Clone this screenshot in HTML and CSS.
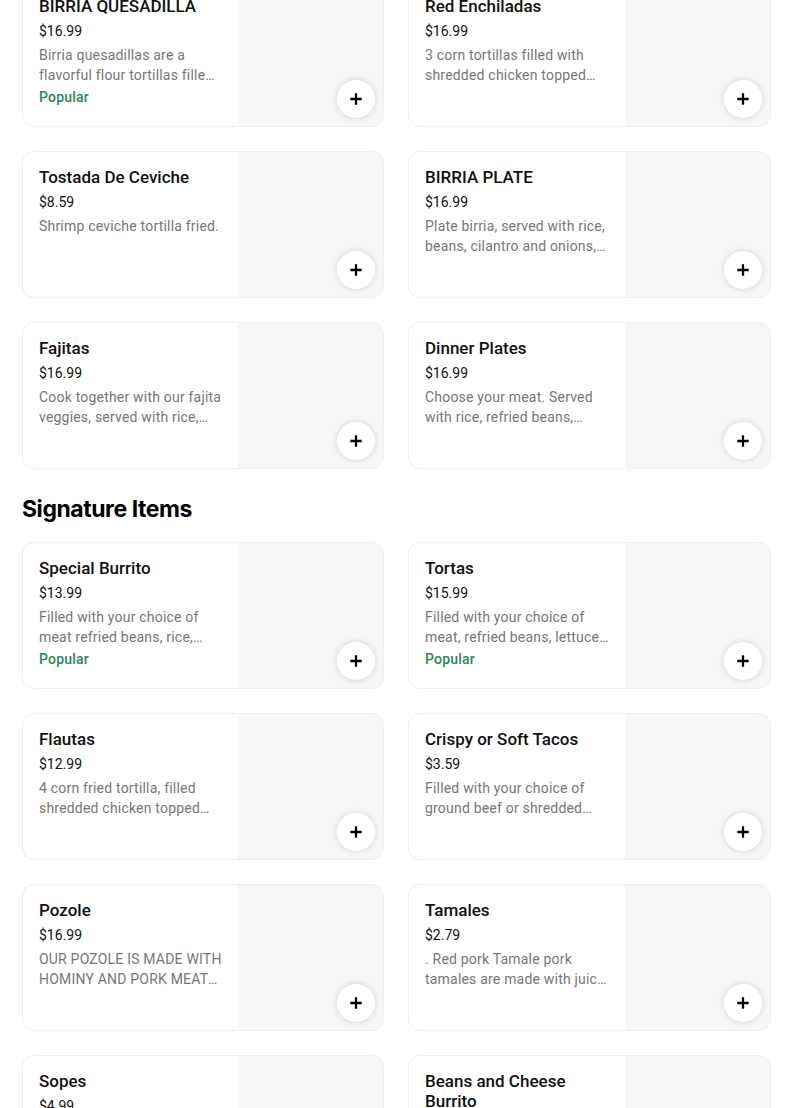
FILE: index.html
```html
<!DOCTYPE html>
<html lang="en">
<head>
<meta charset="utf-8">
<title>Menu</title>
<link rel="stylesheet" href="styles.css">
</head>
<body>
<main class="menu">
  <section class="section">
    <div class="grid">
      <article class="card">
        <div class="info">
          <h3 class="title">BIRRIA QUESADILLA</h3>
          <div class="price">$16.99</div>
          <p class="desc">Birria quesadillas are a flavorful flour tortillas filled with cheese and birria meat.</p>
          <div class="tag">Popular</div>
        </div>
        <div class="thumb"><button class="add" aria-label="Add"><svg viewBox="0 0 16 16" width="14" height="14"><path d="M8 1.5v13M1.5 8h13" stroke="#000" stroke-width="2.6" fill="none"/></svg></button></div>
      </article>
      <article class="card">
        <div class="info">
          <h3 class="title">Red Enchiladas</h3>
          <div class="price">$16.99</div>
          <p class="desc">3 corn tortillas filled with shredded chicken topped with red sauce and cheese.</p>
        </div>
        <div class="thumb"><button class="add" aria-label="Add"><svg viewBox="0 0 16 16" width="14" height="14"><path d="M8 1.5v13M1.5 8h13" stroke="#000" stroke-width="2.6" fill="none"/></svg></button></div>
      </article>
      <article class="card">
        <div class="info">
          <h3 class="title">Tostada De Ceviche</h3>
          <div class="price">$8.59</div>
          <p class="desc">Shrimp ceviche tortilla fried.</p>
        </div>
        <div class="thumb"><button class="add" aria-label="Add"><svg viewBox="0 0 16 16" width="14" height="14"><path d="M8 1.5v13M1.5 8h13" stroke="#000" stroke-width="2.6" fill="none"/></svg></button></div>
      </article>
      <article class="card">
        <div class="info">
          <h3 class="title">BIRRIA PLATE</h3>
          <div class="price">$16.99</div>
          <p class="desc">Plate birria, served with rice, beans, cilantro and onions, and tortillas.</p>
        </div>
        <div class="thumb"><button class="add" aria-label="Add"><svg viewBox="0 0 16 16" width="14" height="14"><path d="M8 1.5v13M1.5 8h13" stroke="#000" stroke-width="2.6" fill="none"/></svg></button></div>
      </article>
      <article class="card">
        <div class="info">
          <h3 class="title">Fajitas</h3>
          <div class="price">$16.99</div>
          <p class="desc">Cook together with our fajita veggies, served with rice, beans and tortillas.</p>
        </div>
        <div class="thumb"><button class="add" aria-label="Add"><svg viewBox="0 0 16 16" width="14" height="14"><path d="M8 1.5v13M1.5 8h13" stroke="#000" stroke-width="2.6" fill="none"/></svg></button></div>
      </article>
      <article class="card">
        <div class="info">
          <h3 class="title">Dinner Plates</h3>
          <div class="price">$16.99</div>
          <p class="desc">Choose your meat. Served with rice, refried beans, salad and tortillas.</p>
        </div>
        <div class="thumb"><button class="add" aria-label="Add"><svg viewBox="0 0 16 16" width="14" height="14"><path d="M8 1.5v13M1.5 8h13" stroke="#000" stroke-width="2.6" fill="none"/></svg></button></div>
      </article>
    </div>
  </section>

  <section class="section">
    <h2 class="section-title">Signature Items</h2>
    <div class="grid">
      <article class="card">
        <div class="info">
          <h3 class="title">Special Burrito</h3>
          <div class="price">$13.99</div>
          <p class="desc">Filled with your choice of meat refried beans, rice, cheese, lettuce and sour cream.</p>
          <div class="tag">Popular</div>
        </div>
        <div class="thumb"><button class="add" aria-label="Add"><svg viewBox="0 0 16 16" width="14" height="14"><path d="M8 1.5v13M1.5 8h13" stroke="#000" stroke-width="2.6" fill="none"/></svg></button></div>
      </article>
      <article class="card">
        <div class="info">
          <h3 class="title">Tortas</h3>
          <div class="price">$15.99</div>
          <p class="desc">Filled with your choice of meat, refried beans, lettuce, tomato, avocado and cheese.</p>
          <div class="tag">Popular</div>
        </div>
        <div class="thumb"><button class="add" aria-label="Add"><svg viewBox="0 0 16 16" width="14" height="14"><path d="M8 1.5v13M1.5 8h13" stroke="#000" stroke-width="2.6" fill="none"/></svg></button></div>
      </article>
      <article class="card">
        <div class="info">
          <h3 class="title">Flautas</h3>
          <div class="price">$12.99</div>
          <p class="desc">4 corn fried tortilla, filled shredded chicken topped with lettuce and sour cream.</p>
        </div>
        <div class="thumb"><button class="add" aria-label="Add"><svg viewBox="0 0 16 16" width="14" height="14"><path d="M8 1.5v13M1.5 8h13" stroke="#000" stroke-width="2.6" fill="none"/></svg></button></div>
      </article>
      <article class="card">
        <div class="info">
          <h3 class="title">Crispy or Soft Tacos</h3>
          <div class="price">$3.59</div>
          <p class="desc">Filled with your choice of ground beef or shredded chicken, lettuce and cheese.</p>
        </div>
        <div class="thumb"><button class="add" aria-label="Add"><svg viewBox="0 0 16 16" width="14" height="14"><path d="M8 1.5v13M1.5 8h13" stroke="#000" stroke-width="2.6" fill="none"/></svg></button></div>
      </article>
      <article class="card">
        <div class="info">
          <h3 class="title">Pozole</h3>
          <div class="price">$16.99</div>
          <p class="desc">OUR POZOLE IS MADE WITH HOMINY AND PORK MEAT SERVED WITH TOSTADAS.</p>
        </div>
        <div class="thumb"><button class="add" aria-label="Add"><svg viewBox="0 0 16 16" width="14" height="14"><path d="M8 1.5v13M1.5 8h13" stroke="#000" stroke-width="2.6" fill="none"/></svg></button></div>
      </article>
      <article class="card">
        <div class="info">
          <h3 class="title">Tamales</h3>
          <div class="price">$2.79</div>
          <p class="desc">. Red pork Tamale pork tamales are made with juicy pork in red chile sauce.</p>
        </div>
        <div class="thumb"><button class="add" aria-label="Add"><svg viewBox="0 0 16 16" width="14" height="14"><path d="M8 1.5v13M1.5 8h13" stroke="#000" stroke-width="2.6" fill="none"/></svg></button></div>
      </article>
      <article class="card">
        <div class="info">
          <h3 class="title">Sopes</h3>
          <div class="price">$4.99</div>
          <p class="desc">Thick corn tortilla topped with beans, meat, lettuce and cheese.</p>
        </div>
        <div class="thumb"><button class="add" aria-label="Add"><svg viewBox="0 0 16 16" width="14" height="14"><path d="M8 1.5v13M1.5 8h13" stroke="#000" stroke-width="2.6" fill="none"/></svg></button></div>
      </article>
      <article class="card">
        <div class="info">
          <h3 class="title">Beans and Cheese Burrito</h3>
          <div class="price">$9.99</div>
          <p class="desc">Refried beans and cheese wrapped in a flour tortilla.</p>
        </div>
        <div class="thumb"><button class="add" aria-label="Add"><svg viewBox="0 0 16 16" width="14" height="14"><path d="M8 1.5v13M1.5 8h13" stroke="#000" stroke-width="2.6" fill="none"/></svg></button></div>
      </article>
    </div>
  </section>
</main>
</body>
</html>
```

FILE: styles.css
```css
* { box-sizing: border-box; }
html, body { margin: 0; padding: 0; background: #fff; }
body {
  font-family: Roboto, "Liberation Sans", sans-serif;
  color: #000;
  overflow: hidden;
}
.menu {
  width: 749px;
  margin: -20px 0 0 22px;
}
.section-title {
  margin: 0;
  padding: 24px 0 0;
  height: 73px;
  font-family: Inter, Roboto, sans-serif;
  font-size: 23px;
  line-height: 32px;
  font-weight: 700;
  letter-spacing: -0.45px;
}
.grid {
  display: grid;
  grid-template-columns: 362px 363px;
  column-gap: 24px;
  row-gap: 24px;
}
.card {
  display: flex;
  height: 147px;
  border: 1px solid #eeeeee;
  border-radius: 12px;
  overflow: hidden;
  background: #fff;
}
.info {
  flex: 1;
  min-width: 0;
  padding: 15px 16px 0 16px;
}
.title {
  margin: 0;
  font-size: 17px;
  line-height: 20px;
  font-weight: 500;
  color: #111;
}
.price {
  margin-top: 5px;
  font-size: 14px;
  line-height: 20px;
  color: #111;
}
.desc {
  margin: 4px 0 0;
  font-size: 14px;
  line-height: 20px;
  letter-spacing: 0.2px;
  color: #767676;
  display: -webkit-box;
  -webkit-line-clamp: 2;
  -webkit-box-orient: vertical;
  overflow: hidden;
}
.tag {
  margin-top: 2px;
  font-size: 14px;
  line-height: 20px;
  font-weight: 500;
  letter-spacing: 0.2px;
  color: #2a8753;
}
.thumb {
  flex: 0 0 145px;
  background: #f6f6f6;
  display: flex;
  align-items: flex-end;
  justify-content: flex-end;
  padding: 0 8px 8px 0;
}
.add {
  width: 38px;
  height: 38px;
  border-radius: 50%;
  border: none;
  background: #fff;
  box-shadow: 0 0 6px rgba(0, 0, 0, 0.14);
  display: flex;
  align-items: center;
  justify-content: center;
  padding: 0;
  cursor: pointer;
}
.add svg { display: block; }
```
